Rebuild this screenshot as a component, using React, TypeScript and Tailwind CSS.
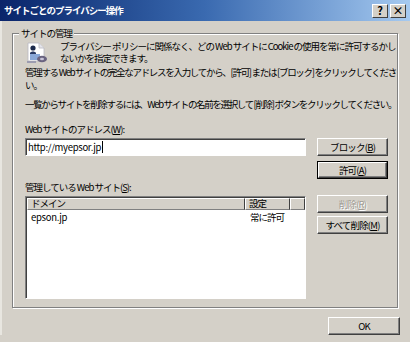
import { ReactNode } from 'react';

const font = { fontFamily: '"Noto Sans CJK JP", "Liberation Sans", sans-serif' };

const Button = ({ children, def, disabled, className = '' }: { children: ReactNode; def?: boolean; disabled?: boolean; className?: string }) => (
    <div className={`h-[18px] ${def ? 'border border-black' : ''} ${className}`}>
        <div
            className={`flex h-full items-center justify-center border border-t-white border-l-white border-r-[#404040] border-b-[#404040] bg-[#d4d0c8] text-[9.5px] tracking-[-0.8px] shadow-[inset_-1px_-1px_0_#808080] ${
                disabled ? 'text-[#a09c94] [text-shadow:1px_1px_0_#fff]' : 'text-black'
            }`}
        >
            {children}
        </div>
    </div>
);

const SiteIcon = () => (
    <svg width="24" height="24" viewBox="0 0 24 24" className="shrink-0">
        <path d="M3 2h11l5 5v13H3z" fill="#fff" stroke="#b8b8c0" strokeWidth="0.8" />
        <path d="M14 2v5h5" fill="#e4e4ea" stroke="#b8b8c0" strokeWidth="0.8" />
        <circle cx="8" cy="7" r="2.6" fill="#1c2a4c" />
        <path d="M5 12c1-2 5-2 6 0v3H5z" fill="#2a3a64" />
        <rect x="5" y="13" width="10" height="6" fill="#8aa8d8" />
        <ellipse cx="17" cy="18" rx="5" ry="3.2" fill="#6a6480" />
        <ellipse cx="17" cy="18" rx="2" ry="1.2" fill="#c8c4d8" />
        <rect x="2" y="20" width="9" height="2" fill="#9c9cb0" />
    </svg>
);

export default function App() {
    return (
        <div className="h-[342px] w-[410px] overflow-hidden bg-[#d4d0c8] text-black" style={font}>
            {/* Title bar */}
            <div className="flex h-[21px] items-center justify-between bg-gradient-to-r from-[#0a246a] via-[#3a6ab0] to-[#a6caf0] pr-[4px] pl-[4px]">
                <span className="text-[9.5px] font-bold tracking-[-1px] text-white">サイトごとのプライバシー操作</span>
                <div className="flex gap-[2px]">
                    <div className="flex h-[14px] w-[16px] items-center justify-center border border-t-white border-l-white border-r-[#404040] border-b-[#404040] bg-[#d4d0c8] text-[11px] leading-none font-bold">
                        ?
                    </div>
                    <div className="flex h-[14px] w-[16px] items-center justify-center border border-t-white border-l-white border-r-[#404040] border-b-[#404040] bg-[#d4d0c8] text-[11px] leading-none font-bold">
                        ×
                    </div>
                </div>
            </div>

            <div className="border-l-[2px] border-l-[#e8e6e0] pt-[12px] pl-[10px]">
                {/* Group box */}
                <div className="relative h-[275px] w-[386px] border border-[#808080] shadow-[inset_1px_1px_0_#fff,1px_1px_0_#fff]">
                    <span className="absolute -top-[7px] left-[6px] bg-[#d4d0c8] px-[2px] text-[9.5px] leading-[13px] tracking-[-1px]">サイトの管理</span>

                    <div className="pt-[6px] pl-[12px] text-[9.5px] leading-[13px] tracking-[-1px]">
                        <div className="flex gap-[11px]">
                            <div className="pt-[1px]">
                                <SiteIcon />
                            </div>
                            <div className="leading-[12px]">
                                <div className="whitespace-nowrap">プライバシー ポリシーに関係なく、どの Web サイトに Cookie の使用を常に許可するかし</div>
                                <div className="whitespace-nowrap">ないかを指定できます。</div>
                            </div>
                        </div>
                        <div className="mt-[1px] whitespace-nowrap tracking-[-1.3px]">管理する Web サイトの完全なアドレスを入力してから、[許可] または [ブロック] をクリックしてくださ</div>
                        <div className="whitespace-nowrap">い。</div>
                        <div className="mt-[6px] whitespace-nowrap tracking-[-1.35px]">一覧からサイトを削除するには、Web サイトの名前を選択して [削除] ボタンをクリックしてください。</div>

                        <div className="mt-[12px] flex gap-[11px]">
                            <div className="w-[281px]">
                                <div>Web サイトのアドレス(<span className="underline">W</span>):</div>
                                <div className="mt-[2px] flex h-[18px] items-center border border-t-[#808080] border-l-[#808080] border-r-white border-b-white bg-white pl-[2px] tracking-[-0.3px] shadow-[inset_1px_1px_0_#404040]">
                                    <span>http://myepsor.jp</span>
                                    <span className="ml-[1px] h-[12px] w-px bg-black" />
                                </div>
                                <div className="mt-[25px]">
                                    管理している Web サイト(<span className="underline">S</span>):
                                </div>
                                <div className="mt-[2px] h-[103px] border border-t-[#808080] border-l-[#808080] border-r-white border-b-white bg-white shadow-[inset_1px_1px_0_#404040]">
                                    <div className="flex h-[13px] pt-[1px] pl-[1px]">
                                        <div className="flex w-[218px] items-center border border-t-white border-l-white border-r-[#404040] border-b-[#808080] bg-[#d4d0c8] pl-[3px] leading-none">
                                            ドメイン
                                        </div>
                                        <div className="flex w-[45px] items-center border border-t-white border-l-white border-r-[#404040] border-b-[#808080] bg-[#d4d0c8] pl-[3px] leading-none">
                                            設定
                                        </div>
                                        <div className="flex-1 border border-t-white border-l-white border-r-[#404040] border-b-[#808080] bg-[#d4d0c8]" />
                                    </div>
                                    <div className="mt-[1px] flex pl-[5px] leading-[12px]">
                                        <div className="w-[219px] tracking-[-0.3px]">epson.jp</div>
                                        <div>常に許可</div>
                                    </div>
                                </div>
                            </div>
                            <div className="w-[71px] pt-[15px]">
                                <Button>
                                    ブロック(<span className="underline">B</span>)
                                </Button>
                                <Button def className="mt-[5px]">
                                    許可(<span className="underline">A</span>)
                                </Button>
                                <Button disabled className="mt-[16px]">
                                    削除(<span className="underline">R</span>)
                                </Button>
                                <Button className="mt-[3px]">
                                    すべて削除(<span className="underline">M</span>)
                                </Button>
                            </div>
                        </div>
                    </div>
                </div>

                <div className="mt-[9px] flex justify-end pr-[10px]">
                    <Button className="w-[72px]">OK</Button>
                </div>
            </div>
        </div>
    );
}
